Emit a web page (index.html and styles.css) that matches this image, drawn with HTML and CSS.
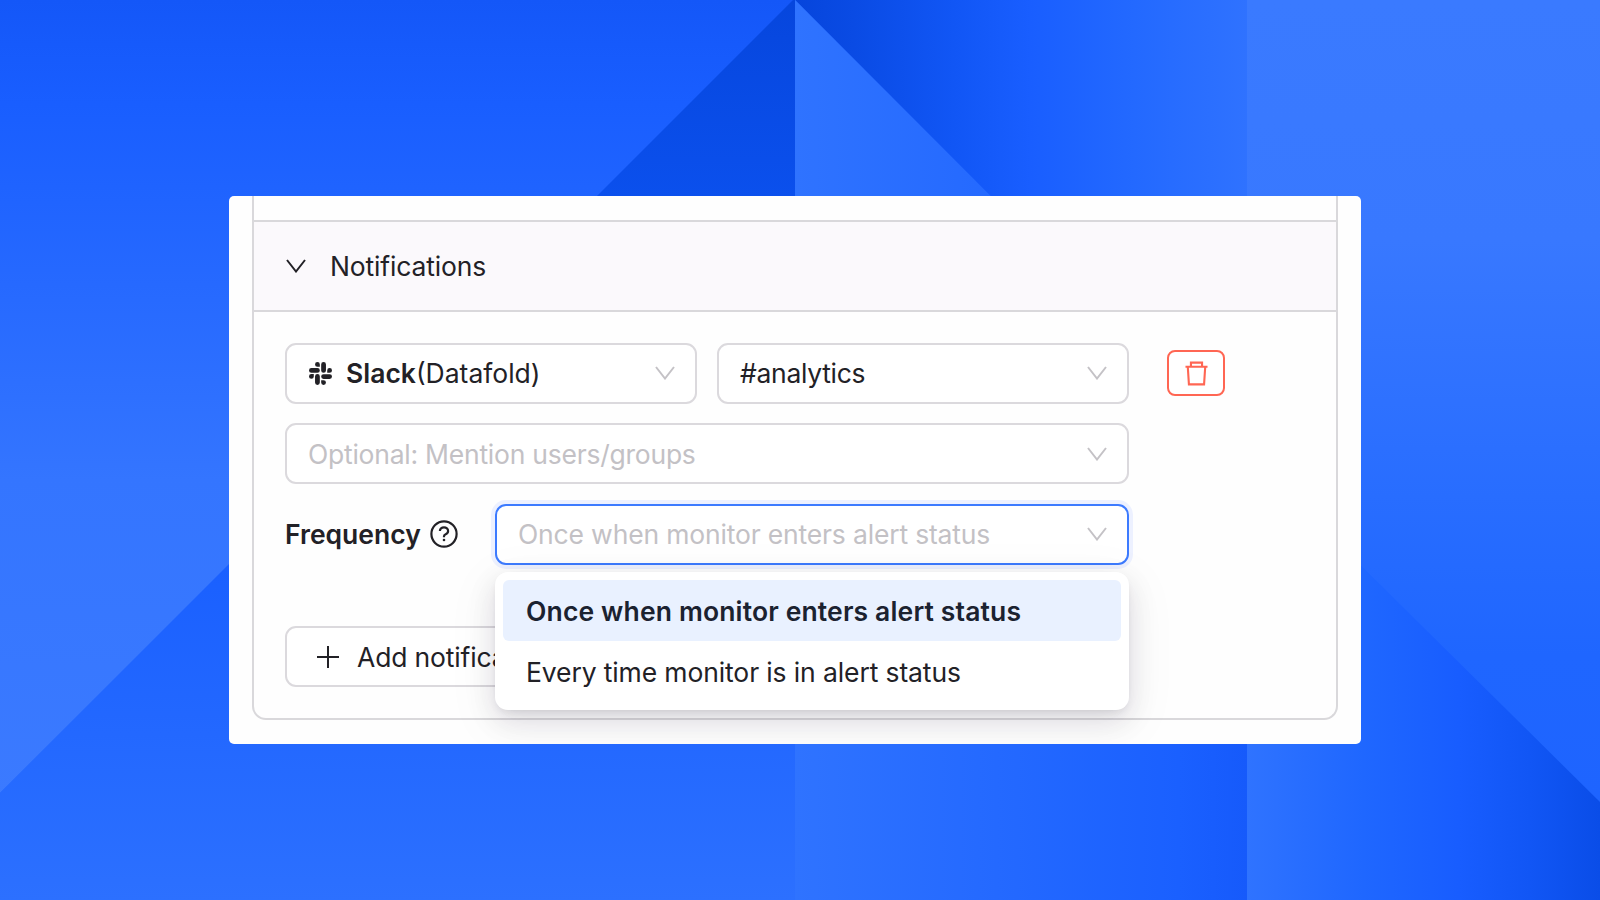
FILE: index.html
```
<!DOCTYPE html>
<html lang="en">
<head>
    <meta charset="UTF-8">
    <meta name="viewport" content="width=device-width, initial-scale=1.0">
    <title>Notifications</title>
    <link rel="stylesheet" href="styles.css">
</head>
<body>
    <svg class="backdrop" viewBox="0 0 1600 900" preserveAspectRatio="none">
        <defs>
            <linearGradient id="left-top" gradientUnits="userSpaceOnUse" x1="0" y1="0" x2="0" y2="800">
                <stop offset="0" stop-color="#1457f8"/>
                <stop offset="0.13" stop-color="#195eff"/>
                <stop offset="0.6" stop-color="#3475ff"/>
                <stop offset="1" stop-color="#3b7aff"/>
            </linearGradient>
            <linearGradient id="left-bottom" gradientUnits="userSpaceOnUse" x1="0" y1="0" x2="0" y2="900">
                <stop offset="0" stop-color="#0646dd"/>
                <stop offset="0.22" stop-color="#0b50ed"/>
                <stop offset="0.63" stop-color="#1a60ff"/>
                <stop offset="1" stop-color="#2c70ff"/>
            </linearGradient>
            <linearGradient id="mid-top" gradientUnits="userSpaceOnUse" x1="795" y1="0" x2="1247" y2="0">
                <stop offset="0" stop-color="#0645dc"/>
                <stop offset="0.13" stop-color="#0a4be4"/>
                <stop offset="0.35" stop-color="#1156f5"/>
                <stop offset="0.52" stop-color="#195eff"/>
                <stop offset="0.75" stop-color="#2369ff"/>
                <stop offset="1" stop-color="#2f72ff"/>
            </linearGradient>
            <linearGradient id="mid-bottom" gradientUnits="userSpaceOnUse" x1="795" y1="0" x2="1247" y2="0">
                <stop offset="0" stop-color="#2f73ff"/>
                <stop offset="0.85" stop-color="#1a60ff"/>
                <stop offset="1" stop-color="#165afb"/>
            </linearGradient>
            <linearGradient id="right-top" gradientUnits="userSpaceOnUse" x1="0" y1="0" x2="0" y2="800">
                <stop offset="0" stop-color="#3a7aff"/>
                <stop offset="0.3" stop-color="#3878ff"/>
                <stop offset="0.62" stop-color="#286dff"/>
                <stop offset="0.82" stop-color="#1f66ff"/>
                <stop offset="1" stop-color="#1e64ff"/>
            </linearGradient>
            <linearGradient id="right-bottom" gradientUnits="userSpaceOnUse" x1="1247" y1="0" x2="1600" y2="0">
                <stop offset="0" stop-color="#2f73ff"/>
                <stop offset="0.33" stop-color="#1f67ff"/>
                <stop offset="0.6" stop-color="#185dff"/>
                <stop offset="0.8" stop-color="#1156f5"/>
                <stop offset="1" stop-color="#0a4de8"/>
            </linearGradient>
        </defs>
        <path fill="url(#left-top)" d="M0 0h795v2L0 793z"/>
        <path fill="url(#left-bottom)" d="M793 0h2v900H0V793z"/>
        <path fill="url(#mid-top)" d="M795 0h452v453z"/>
        <path fill="url(#mid-bottom)" d="M795 0l452 453v447H795z"/>
        <path fill="url(#right-top)" d="M1247 0h353v802l-353-349z"/>
        <path fill="url(#right-bottom)" d="M1247 453l353 349v98h-353z"/>
    </svg>

    <main class="card">
        <section class="panel">
            <header class="panel-header">
                <svg class="chevron dark" viewBox="0 0 20 14"><path d="M1 1l9 11.5L19 1"/></svg>
                <span class="title">Notifications</span>
            </header>
            <div class="panel-body">
                <div class="row">
                    <div class="select">
                        <svg class="slack" viewBox="0 0 24 24">
                            <path d="M5 15.1a2.5 2.5 0 1 1-2.5-2.5H5zM6.3 15.1a2.5 2.5 0 0 1 5 0v6.3a2.5 2.5 0 0 1-5 0z"/>
                            <path d="M8.8 5a2.5 2.5 0 1 1 2.5-2.5V5zM8.8 6.3a2.5 2.5 0 0 1 0 5H2.5a2.5 2.5 0 0 1 0-5z"/>
                            <path d="M19 8.8a2.5 2.5 0 1 1 2.5 2.5H19zM17.7 8.8a2.5 2.5 0 0 1-5 0V2.5a2.5 2.5 0 0 1 5 0z"/>
                            <path d="M15.2 19a2.5 2.5 0 1 1-2.5 2.5V19zM15.2 17.7a2.5 2.5 0 0 1 0-5h6.3a2.5 2.5 0 0 1 0 5z"/>
                        </svg>
                        <span class="value"><b>Slack</b><span class="workspace">(Datafold)</span></span>
                        <svg class="chevron" viewBox="0 0 20 14"><path d="M1 1l9 11.5L19 1"/></svg>
                    </div>
                    <div class="select">
                        <span class="value channel">#analytics</span>
                        <svg class="chevron" viewBox="0 0 20 14"><path d="M1 1l9 11.5L19 1"/></svg>
                    </div>
                    <button class="delete">
                        <svg viewBox="0 0 24 26"><path d="M0.5 6h23M6.2 6V1.6h11.6V6M2.9 6l1.2 18.4h15.8L21.1 6"/></svg>
                    </button>
                </div>
                <div class="row">
                    <div class="select">
                        <span class="placeholder mention">Optional: Mention users/groups</span>
                        <svg class="chevron" viewBox="0 0 20 14"><path d="M1 1l9 11.5L19 1"/></svg>
                    </div>
                </div>
                <div class="row">
                    <div class="label">
                        <span>Frequency</span>
                        <svg class="help" viewBox="0 0 28 28">
                            <circle cx="14" cy="14" r="12.6"/>
                            <path d="M9.9 11.1c0-2.2 1.8-3.8 4.1-3.8s4.1 1.5 4.1 3.6c0 1.6-1 2.7-2.4 3.3-1.1.5-1.7 1.1-1.7 2.1v.9"/>
                            <circle class="dot" cx="14" cy="20" r="1.3"/>
                        </svg>
                    </div>
                    <div class="select open">
                        <span class="placeholder frequency">Once when monitor enters alert status</span>
                        <svg class="chevron" viewBox="0 0 20 14"><path d="M1 1l9 11.5L19 1"/></svg>
                        <div class="dropdown">
                            <div class="option selected">Once when monitor enters alert status</div>
                            <div class="option">Every time monitor is in alert status</div>
                        </div>
                    </div>
                </div>
                <button class="add">
                    <svg viewBox="0 0 22 22"><path d="M11 0v22M0 11h22"/></svg>
                    <span>Add notification</span>
                </button>
            </div>
        </section>
    </main>
</body>
</html>
```
FILE: styles.css
```
* {
    box-sizing: border-box;
}

body {
    margin: 0;
    height: 900px;
    overflow: hidden;
    background: #1f66ff;
    font-family: Inter, "Liberation Sans", sans-serif;
    font-size: 26.5px;
    color: #222126;
}

svg {
    display: block;
    flex: none;
    fill: none;
    stroke: currentColor;
}

.backdrop {
    position: absolute;
    top: 0;
    left: 0;
    width: 1600px;
    height: 900px;
    stroke: none;
}

.card {
    position: relative;
    width: 1132px;
    height: 548px;
    margin: 196px 0 0 229px;
    padding: 0 23px;
    background: #fefefe;
    border-radius: 5px;
    overflow: hidden;
}

.panel {
    height: 524px;
    padding-top: 24px;
    border: 2px solid #d9d8db;
    border-top: none;
    border-radius: 0 0 14px 14px;
}

.panel-header {
    display: flex;
    align-items: center;
    gap: 24px;
    height: 92px;
    padding-left: 32px;
    background: #fbf9fc;
    border-top: 2px solid #d9d8db;
    border-bottom: 2px solid #d9d8db;
}

.title {
    letter-spacing: -0.15px;
}

.panel-body {
    display: flex;
    flex-direction: column;
    gap: 19.5px;
    padding: 30.5px 0 0 31px;
}

.row {
    display: flex;
    align-items: center;
    gap: 20px;
    width: 844px;
}

.select {
    position: relative;
    display: flex;
    flex: 1 0 412px;
    align-items: center;
    height: 61px;
    padding: 0 20px 0 21px;
    background: #fff;
    border: 2px solid #dbd9dd;
    border-radius: 11px;
    white-space: nowrap;
}

.select.open {
    border-color: #3d7bff;
    box-shadow: 0 0 0 4px #edf1ff;
}

.select > .chevron {
    margin-left: auto;
}

.chevron {
    width: 20px;
    height: 14px;
    color: #c4c2c6;
    stroke-width: 2;
}

.chevron.dark {
    color: #222126;
}

.slack {
    width: 23px;
    height: 23px;
    margin: 0 14px 0 1px;
    fill: #222126;
    stroke: none;
}

.value b {
    font-weight: 600;
}

.channel {
    letter-spacing: -0.3px;
}

.placeholder {
    color: #c3c1c5;
}

.mention {
    letter-spacing: -0.24px;
}

.frequency {
    letter-spacing: -0.17px;
}

.delete {
    display: flex;
    flex: none;
    align-items: center;
    justify-content: center;
    width: 58px;
    height: 46px;
    margin-left: 18px;
    padding: 0;
    background: #fff;
    border: 2px solid #ff6653;
    border-radius: 8px;
    color: #ff6653;
}

.delete svg {
    width: 23px;
    height: 25px;
    stroke-width: 2.2;
}

.label {
    display: flex;
    flex: none;
    align-items: center;
    gap: 9px;
    width: 190px;
    font-weight: 600;
}

.help {
    width: 28px;
    height: 28px;
    stroke-width: 2.2;
}

.help .dot {
    fill: currentColor;
    stroke: none;
}

/* opens under the frequency select, over the add button */
.dropdown {
    position: absolute;
    top: 66px;
    left: -2px;
    z-index: 2;
    width: 634px;
    height: 138px;
    padding: 8px;
    background: #fff;
    border-radius: 13px;
    box-shadow: 0 10px 28px rgba(30, 20, 40, 0.12), 0 4px 10px -4px rgba(30, 20, 40, 0.14), 0 12px 48px 10px rgba(30, 20, 40, 0.04);
}

.option {
    height: 61px;
    padding-left: 23px;
    border-radius: 6px;
    line-height: 62px;
    letter-spacing: -0.12px;
}

.option.selected {
    background: #e9f1ff;
    color: #1b2230;
    font-weight: 600;
    letter-spacing: 0.15px;
}

.add {
    display: flex;
    align-items: center;
    gap: 18px;
    width: 300px;
    height: 61px;
    margin-top: 42px;
    padding: 0 0 0 30px;
    background: #fff;
    border: 2px solid #dbd9dd;
    border-radius: 11px;
    color: inherit;
    font: inherit;
    letter-spacing: -0.15px;
    white-space: nowrap;
}

.add svg {
    width: 22px;
    height: 22px;
    stroke-width: 2;
}
```
